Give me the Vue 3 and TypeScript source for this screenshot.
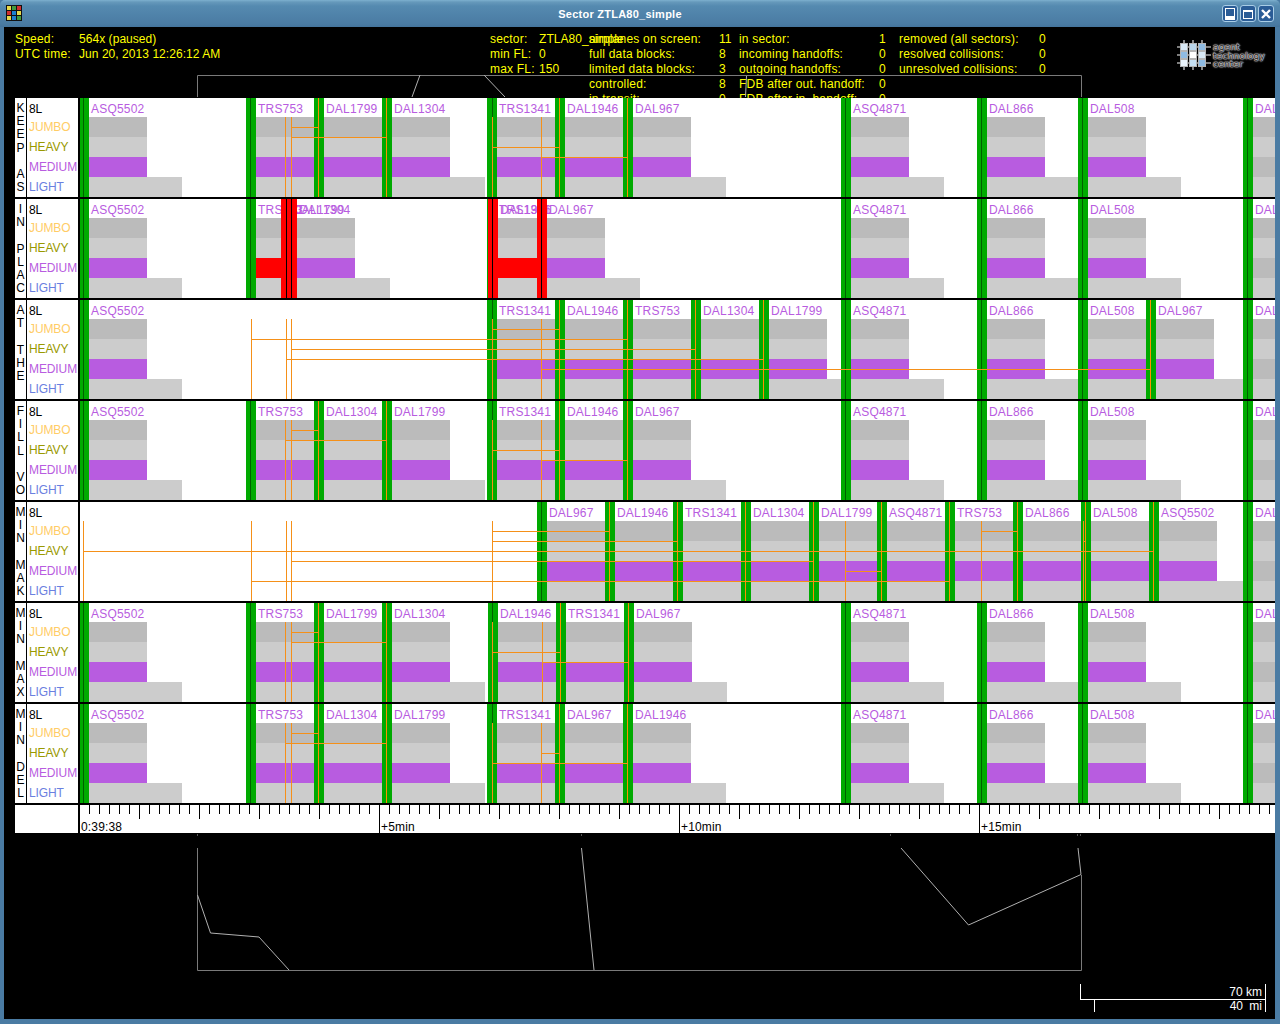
<script setup lang="ts">
interface Flight {
  x: number;
  label: string;
  line: number;
  orange?: boolean;
  redStripe?: boolean;
  redBlock?: boolean;
  gray?: boolean;
}

interface Lane {
  title: string;
  flights: Flight[];
  // vertical links: x, horizontal links: y offset, x from, x to
  verticals: number[];
  links: [number, number, number][];
}

function f(x: number, label: string, line = x + 4, orange = false): Flight {
  return { x, label, line, orange };
}
function o(x: number, label: string, line = x + 4): Flight {
  return f(x, label, line, true);
}

const first = f(79, "ASQ5502", 83);
const tail: Flight[] = [
  f(841, "ASQ4871"),
  f(977, "DAL866"),
  f(1078, "DAL508"),
  { x: 1243, label: "DAL1202", line: 1247, gray: true },
];

const lanes: Lane[] = [
  {
    title: "KEEP AS",
    flights: [first, f(246, "TRS753"), o(314, "DAL1799"), o(382, "DAL1304"), f(487, "TRS1341", 492), o(555, "DAL1946"), o(623, "DAL967"), ...tail],
    verticals: [285, 291, 492, 541],
    links: [[29, 291, 318], [39, 291, 386], [49, 492, 559], [59, 541, 627]],
  },
  {
    title: "IN PLAC",
    flights: [
      first,
      { x: 246, label: "TRS753", line: 250, redBlock: true },
      { x: 281, label: "DAL1799", line: 286, redStripe: true, redBlock: true },
      { x: 287, label: "DAL1304", line: 291, redStripe: true },
      { x: 487, label: "TRS1341", line: 492, redBlock: true },
      { x: 488, label: "DAL1946", line: 492, redStripe: true, redBlock: true },
      { x: 537, label: "DAL967", line: 541, redStripe: true },
      ...tail,
    ],
    verticals: [],
    links: [],
  },
  {
    title: "AT THE",
    flights: [first, f(487, "TRS1341", 492), o(555, "DAL1946"), o(623, "TRS753"), o(691, "DAL1304"), o(759, "DAL1799"), ...tail.slice(0, 3), o(1146, "DAL967"), tail[3]],
    verticals: [251, 286, 291, 492, 541],
    links: [[29, 492, 559], [39, 251, 627], [49, 291, 695], [59, 286, 763], [69, 541, 1150]],
  },
  {
    title: "FILL VO",
    flights: [first, f(246, "TRS753"), o(314, "DAL1304"), o(382, "DAL1799"), f(487, "TRS1341", 492), o(555, "DAL1946"), o(623, "DAL967"), ...tail],
    verticals: [285, 291, 492, 541],
    links: [[29, 291, 318], [39, 285, 386], [49, 492, 559], [59, 541, 627]],
  },
  {
    title: "MIN MAK",
    flights: [f(537, "DAL967"), o(605, "DAL1946"), o(673, "TRS1341"), o(741, "DAL1304"), o(809, "DAL1799"), o(877, "ASQ4871"), o(945, "TRS753"), o(1013, "DAL866"), o(1081, "DAL508"), o(1149, "ASQ5502"), tail[3]],
    verticals: [83, 251, 286, 291, 492, 845, 981, 1083],
    links: [[29, 492, 609], [29, 981, 1017], [39, 492, 677], [39, 1083, 1085], [49, 83, 1153], [59, 291, 813], [69, 845, 881], [79, 251, 949]],
  },
  {
    title: "MIN MAX",
    flights: [first, f(246, "TRS753"), o(314, "DAL1799"), o(382, "DAL1304"), f(488, "DAL1946", 492), o(556, "TRS1341"), o(624, "DAL967"), ...tail],
    verticals: [285, 291, 492, 542],
    links: [[29, 291, 318], [39, 291, 386], [49, 492, 560], [59, 542, 628]],
  },
  {
    title: "MIN DEL",
    flights: [first, f(246, "TRS753"), o(314, "DAL1304"), o(382, "DAL1799"), f(487, "TRS1341", 492), o(555, "DAL967"), o(623, "DAL1946"), ...tail],
    verticals: [285, 291, 492, 541],
    links: [[29, 291, 318], [39, 285, 386], [49, 541, 559], [59, 492, 627]],
  },
];

const categories = [
  { name: "8L", cls: "c-rwy" },
  { name: "JUMBO", cls: "c-jumbo" },
  { name: "HEAVY", cls: "c-heavy" },
  { name: "MEDIUM", cls: "c-medium" },
  { name: "LIGHT", cls: "c-light" },
];

const infoColumns = [
  { width: 475, label: 64, rows: [["Speed:", "564x (paused)"], ["UTC time:", "Jun 20, 2013 12:26:12 AM"]] },
  { width: 99, label: 49, rows: [["sector:", "ZTLA80_simple"], ["min FL:", "0"], ["max FL:", "150"]] },
  {
    width: 150,
    label: 130,
    rows: [["airplanes on screen:", "11"], ["full data blocks:", "8"], ["limited data blocks:", "3"], ["controlled:", "8"], ["in transit:", "0"]],
  },
  {
    width: 160,
    label: 140,
    rows: [["in sector:", "1"], ["incoming handoffs:", "0"], ["outgoing handoffs:", "0"], ["FDB after out. handoff:", "0"], ["FDB after in. handoff:", "0"]],
  },
  { width: 150, label: 140, rows: [["removed (all sectors):", "0"], ["resolved collisions:", "0"], ["unresolved collisions:", "0"]] },
];

const ticks = Array.from({ length: 119 }, (_, i) => {
  const n = i + 1;
  return { left: n * 10 - 1, kind: n % 30 === 0 ? "major" : n % 6 === 0 ? "long" : "short" };
});

const marks = [
  { left: 1, text: "0:39:38" },
  { left: 301, text: "+5min" },
  { left: 601, text: "+10min" },
  { left: 901, text: "+15min" },
];

const logoCells = [
  ["#d8e8f4", "#b9d5ea", "#8fbbe2"],
  ["#8fbbe2", "#ffffff", "#d8e8f4"],
  ["#eaf3fa", "#c6dff2", "#8fbbe2"],
];

const iconCells = [
  ["#e8d84a", "#3f9a3f", "#d03030"],
  ["#d03030", "#1f7fd0", "#e8d84a"],
  ["#e8d84a", "#1f7fd0", "#3f9a3f"],
];

function vPath(x: number) {
  return `M${x - 80 + 0.5} 19V99`;
}
function hPath(link: [number, number, number]) {
  return `M${link[1] - 80 + 0.5} ${link[0] + 0.5}H${link[2] - 80 + 1}`;
}
</script>

<template>
  <div class="window">
    <div class="titlebar">
      <svg class="app-icon" width="16" height="16" viewBox="0 0 16 16">
        <rect width="16" height="16" fill="#111" />
        <template v-for="(row, ry) in iconCells" :key="ry">
          <rect v-for="(c, cx) in row" :key="cx" :x="1 + cx * 5" :y="1 + ry * 5" width="4" height="4" :fill="c" />
        </template>
      </svg>
      <div class="title">Sector ZTLA80_simple</div>
      <div class="win-buttons">
        <button class="win-btn">
          <svg width="12" height="12" viewBox="0 0 12 12">
            <rect x="1.5" y="0.5" width="9" height="8" fill="#2a5c96" stroke="#fff" />
            <rect x="1" y="9" width="10" height="3" fill="#fff" />
          </svg>
        </button>
        <button class="win-btn">
          <svg width="12" height="12" viewBox="0 0 12 12">
            <rect x="1.5" y="2.5" width="9" height="8" fill="#2a5c96" stroke="#fff" />
            <rect x="1" y="2" width="10" height="2" fill="#fff" />
          </svg>
        </button>
        <button class="win-btn">
          <svg width="12" height="12" viewBox="0 0 12 12">
            <path d="M2 2L10 10M10 2L2 10" stroke="#fff" stroke-width="2.4" />
          </svg>
        </button>
      </div>
    </div>

    <div class="body">
      <div class="info">
        <div v-for="(col, i) in infoColumns" :key="i" class="info-col" :style="{ width: col.width + 'px' }">
          <div v-for="row in col.rows" :key="row[0]" class="info-row">
            <span class="info-label" :style="{ width: col.label + 'px' }">{{ row[0] }}</span>
            <span class="info-value">{{ row[1] }}</span>
          </div>
        </div>
        <div class="logo">
          <svg width="36" height="32" viewBox="0 0 36 32">
            <path
              d="M8 1v30M17 1v30M26 1v30M1 8h34M1 16h34M1 24h34"
              fill="none"
              stroke="#a8a8a8"
              stroke-width="1.6"
            />
            <template v-for="(row, ry) in logoCells" :key="ry">
              <rect
                v-for="(c, cx) in row"
                :key="cx"
                :x="4.5 + cx * 9"
                :y="4.5 + ry * 8"
                width="7"
                height="7"
                :fill="c"
                stroke="#b4b4b4"
              />
            </template>
          </svg>
          <div class="logo-text">
            <span>agent</span>
            <span>technology</span>
            <span>center</span>
          </div>
        </div>
      </div>

      <svg class="map" width="1280" height="1024" viewBox="0 0 1280 1024">
        <path class="map-edge" d="M197.5 97V75.5H1081.5V97M197.5 848V970.5H1081.5V875" />
        <path class="map-path" d="M420 75L412 97M484 75L505 97M746.5 76L745.5 97" />
        <path class="map-path" d="M197.5 895L210.5 933L259 937L289 970M581.5 848L594 970M901 848L968.5 925L1081 874.5L1078 848" />
        <path class="map-dots" d="M197 835h1M581 835h1M890 835h1M1077 835h1M1080 835h1" />
        <g class="scale">
          <path d="M1080 999.5H1266M1080.5 984V999M1265.5 984V1012M1094.5 999V1012" />
          <text x="1262" y="996" text-anchor="end">70 km</text>
          <text x="1262" y="1010" text-anchor="end" class="scale-mi">40 mi</text>
        </g>
      </svg>

      <div class="board">
        <div v-for="lane in lanes" :key="lane.title" class="lane">
          <div class="lane-title">
            <span v-for="(ch, i) in lane.title.split('')" :key="i" class="lane-letter">{{ ch }}</span>
          </div>
          <div class="lane-cats">
            <div v-for="c in categories" :key="c.name" :class="['cat', c.cls]">{{ c.name }}</div>
          </div>
          <div class="chart">
            <div
              v-for="fl in lane.flights"
              :key="fl.label + fl.x"
              :class="['flight', { 'is-red': fl.redBlock, 'is-gray': fl.gray }]"
              :style="{ left: fl.x - 80 + 10 + 'px' }"
            >
              <div class="callsign">{{ fl.label }}</div>
              <div class="bar bar-jumbo"></div>
              <div class="bar bar-heavy"></div>
              <div class="bar bar-medium"></div>
              <div class="bar bar-light"></div>
            </div>
            <div
              v-for="fl in lane.flights"
              :key="'s' + fl.label + fl.x"
              :class="['stripe', { 'is-red': fl.redStripe }]"
              :style="{ left: fl.x - 80 + 'px' }"
            >
              <span
                :class="['stripe-line', { 'is-orange': fl.orange }]"
                :style="{ left: fl.line - fl.x + 'px' }"
              ></span>
            </div>
            <svg class="links" width="1195" height="99" viewBox="0 0 1195 99">
              <path v-for="x in lane.verticals" :key="x" :d="vPath(x)" />
              <path v-for="(l, i) in lane.links" :key="i" :d="hPath(l)" />
            </svg>
          </div>
        </div>

        <div class="ruler-row">
          <div class="ruler-left"></div>
          <div class="ruler">
            <span
              v-for="t in ticks"
              :key="t.left"
              :class="['tick', 'tick-' + t.kind]"
              :style="{ left: t.left + 'px' }"
            ></span>
            <span v-for="m in marks" :key="m.text" class="mark" :style="{ left: m.left + 'px' }">{{ m.text }}</span>
          </div>
        </div>
      </div>
    </div>
  </div>
</template>

<style scoped>
.window {
  width: 1280px;
  height: 1024px;
  box-sizing: border-box;
  display: flex;
  flex-direction: column;
  padding: 0 5px 5px 4px;
  background: #4a7ba3;
  border-radius: 5px 5px 0 0;
  overflow: hidden;
  font-family: "Liberation Sans", Arial, sans-serif;
  font-size: 12px;
}

.titlebar {
  flex: none;
  height: 27px;
  margin: 0 -5px 0 -4px;
  display: flex;
  align-items: flex-start;
  background: linear-gradient(#7db0cf 0, #6699bb 2px, #558ab0 6px, #4a7ba3 24px, #44749c 27px);
}

.app-icon {
  margin: 5px 0 0 6px;
}

.title {
  flex: 1;
  padding: 0 4px 0 0;
  text-align: center;
  color: #fff;
  font-size: 11px;
  font-weight: bold;
  letter-spacing: 0.25px;
  line-height: 28px;
}

.win-buttons {
  display: flex;
  gap: 2px;
  margin: 5px 6px 0 0;
}

.win-btn {
  width: 16px;
  height: 17px;
  padding: 0;
  border: 1px solid #a9cde6;
  border-radius: 3px;
  background: #2a5c96;
  display: flex;
  align-items: center;
  justify-content: center;
}

.body {
  flex: 1;
  background: #000;
  min-height: 0;
}

.info {
  height: 71px;
  box-sizing: border-box;
  padding: 5px 10px 0 11px;
  display: flex;
  overflow: hidden;
  color: #ffff00;
  line-height: 15px;
}

.info-col {
  flex: none;
}

.info-row {
  display: flex;
  white-space: nowrap;
  height: 15px;
}

.info-label {
  flex: none;
  letter-spacing: 0.2px;
}

.info-value {
  letter-spacing: 0.05px;
}

.logo {
  margin-left: auto;
  margin-top: 2px;
  display: flex;
  align-items: flex-start;
  height: 44px;
}

.logo svg {
  margin-top: 5px;
}

.logo-text {
  display: flex;
  flex-direction: column;
  margin-left: 1px;
  padding-top: 9px;
  font-family: "DejaVu Sans", sans-serif;
  font-size: 9px;
  letter-spacing: 0.2px;
  line-height: 8.5px;
  color: #222;
  text-shadow: 0 0 2px #ddd, 0 0 2px #ddd, 0 0 1px #fff, 0 0 1px #fff;
}

.map {
  position: absolute;
  top: 0;
  left: 0;
  pointer-events: none;
}

.map-edge {
  fill: none;
  stroke: #7a7a7a;
  stroke-width: 1;
}

.map-path {
  fill: none;
  stroke: #b0b0b0;
  stroke-width: 1;
}

.map-dots {
  fill: none;
  stroke: #aaa;
  stroke-width: 1;
}

.scale path {
  fill: none;
  stroke: #fff;
  stroke-width: 1;
}

.scale text {
  fill: #fff;
  font-size: 12px;
}

.scale-mi {
  word-spacing: 3px;
}

.board {
  position: relative;
  margin-left: 11px;
  display: flex;
  flex-direction: column;
  gap: 2px;
  background: #000;
}

.lane {
  display: flex;
  height: 99px;
  background: #fff;
}

.lane-title {
  flex: none;
  width: 12px;
  height: 99px;
  padding-top: 4px;
  box-sizing: border-box;
  overflow: hidden;
  border-right: 1px solid #000;
  display: flex;
  flex-direction: column;
  align-items: center;
}

.lane-letter {
  flex: none;
  height: 13.2px;
  line-height: 13.2px;
  color: #000;
  min-width: 4px;
  text-align: center;
}

.lane-cats {
  flex: none;
  width: 53px;
  padding-left: 2px;
  box-sizing: border-box;
  border-right: 2px solid #000;
}

.cat {
  height: 20px;
  line-height: 20px;
  letter-spacing: -0.1px;
  white-space: nowrap;
}

.cat:first-child {
  height: 19px;
  line-height: 22px;
}

.c-rwy {
  color: #000;
}

.c-jumbo {
  color: #ffcc66;
}

.c-heavy {
  color: #999900;
}

.c-medium {
  color: #b85ce0;
}

.c-light {
  color: #6a80e0;
}

.chart {
  position: relative;
  flex: 1;
  height: 99px;
  overflow: hidden;
}

.flight {
  position: absolute;
  top: 0;
  width: 93px;
}

.callsign {
  height: 19px;
  line-height: 22px;
  padding-left: 2px;
  color: #b85ce0;
  letter-spacing: 0.2px;
  white-space: nowrap;
}

.bar {
  height: 20px;
}

.bar-jumbo {
  width: 58px;
  background: #bbbbbb;
}

.bar-heavy {
  width: 58px;
  background: #cccccc;
}

.bar-medium {
  width: 58px;
  background: #b85ce0;
}

.bar-light {
  width: 93px;
  background: #cccccc;
}

.is-red .bar-medium {
  background: #ff0000;
}

.is-gray .bar-medium {
  background: #bbbbbb;
}

.stripe {
  position: absolute;
  top: 0;
  width: 10px;
  height: 99px;
  background: #00aa00;
}

.stripe.is-red {
  background: #ff0000;
}

.stripe-line {
  position: absolute;
  top: 0;
  width: 1px;
  height: 99px;
  background: #006000;
}

.stripe-line.is-orange {
  background: #ff8f00;
}

.stripe.is-red .stripe-line {
  background: #000;
}

.links {
  position: absolute;
  top: 0;
  left: 0;
}

.links path {
  fill: none;
  stroke: #f59018;
  stroke-width: 1;
  shape-rendering: crispEdges;
}

.ruler-row {
  display: flex;
  height: 28px;
  background: #fff;
}

.ruler-left {
  flex: none;
  width: 65px;
  box-sizing: border-box;
  border-right: 2px solid #000;
}

.ruler {
  position: relative;
  flex: 1;
  overflow: hidden;
}

.tick {
  position: absolute;
  top: 0;
  width: 1px;
  background: #000;
}

.tick-short {
  height: 9px;
}

.tick-long {
  height: 14px;
}

.tick-major {
  height: 28px;
}

.mark {
  position: absolute;
  top: 15px;
  line-height: 14px;
  color: #000;
  letter-spacing: 0.15px;
  white-space: nowrap;
}
</style>

<style>
html,
body {
  margin: 0;
  background: #4a7ba3;
}
</style>
